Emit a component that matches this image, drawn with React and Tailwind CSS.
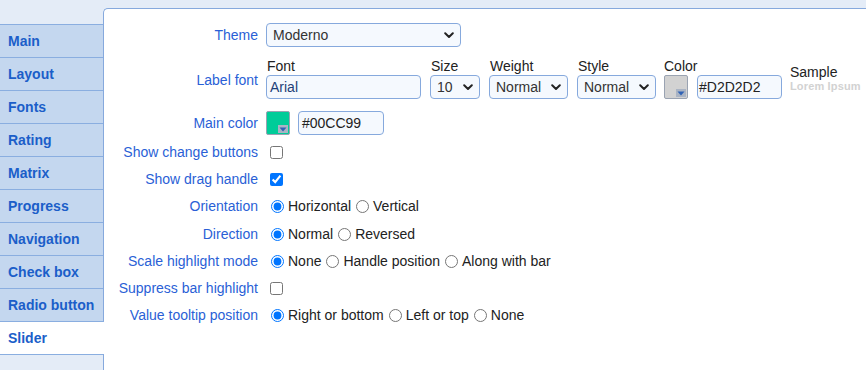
import React from "react";

const tabs = ["Main","Layout","Fonts","Rating","Matrix","Progress","Navigation","Check box","Radio button","Slider"];

function Chevron() {
  return (
    <svg width="10" height="7" viewBox="0 0 10 7" className="shrink-0">
      <path d="M1.2 1.3 L5 5 L8.8 1.3" fill="none" stroke="#222" strokeWidth="2" strokeLinecap="round" strokeLinejoin="round" />
    </svg>
  );
}

function Select({ value, w }) {
  return (
    <div className={`${w} h-[24px] flex items-center justify-between pl-[6px] pr-[6px] border border-[#86a9dd] rounded-[4px] bg-[#f5f9fe] text-[#333]`}>
      <span>{value}</span>
      <Chevron />
    </div>
  );
}

function Input({ value, w, cls = "text-[#222]", pl = "pl-[3px]" }) {
  return (
    <div className={`${w} h-[24px] flex items-center ${pl} border border-[#86a9dd] rounded-[4px] bg-[#f5f9fe] ${cls}`}>
      {value}
    </div>
  );
}

function Swatch({ color }) {
  return (
    <div className="relative w-[24px] h-[24px] border border-[#9aa3b2] rounded-[2px]" style={{ background: color }}>
      <div className="absolute right-[1px] bottom-[1px] w-[10px] h-[8px] bg-[#aab4c4] flex items-center justify-center">
        <svg width="8" height="5" viewBox="0 0 8 5"><path d="M0.5 0.5 L7.5 0.5 L4 4.5 Z" fill="#2f62b5" /></svg>
      </div>
    </div>
  );
}

function Row({ label, h = "h-[27.2px]", children, cls = "" }) {
  return (
    <div className={`flex items-center ${h} ${cls}`}>
      <div className="w-[154px] shrink-0 text-right text-[#2a5fd6]">{label}</div>
      <div className="ml-[8px] flex items-center">{children}</div>
    </div>
  );
}

function Radios({ options }) {
  return (
    <div className="flex items-center text-[#222]">
      {options.map((o, i) => (
        <label key={o} className="flex items-center">
          <input type="radio" name={options.join("")} defaultChecked={i === 0} className="ml-[5px] mr-[4px] w-[13px] h-[13px]" />
          <span>{o}</span>
        </label>
      ))}
    </div>
  );
}

function Check({ checked }) {
  return <input type="checkbox" defaultChecked={checked} className="ml-[4px] w-[13px] h-[13px]" />;
}

function Labeled({ label, children }) {
  return (
    <div className="flex flex-col">
      <div className="h-[17px] leading-[16px] text-[#222] pl-[1px]">{label}</div>
      {children}
    </div>
  );
}

export default function App() {
  return (
    <div className="w-[866px] h-[370px] flex bg-[#e4ecf7] overflow-hidden text-[14px]" style={{ fontFamily: '"Liberation Sans", Arial, sans-serif' }}>
      <div className="w-[103px] shrink-0 pt-[24px] flex flex-col">
        {tabs.map((t) => {
          const active = t === "Slider";
          return (
            <div
              key={t}
              className={`h-[33px] border-t border-[#8aaee0] flex items-center pl-[8px] font-bold text-[#1b5ec9] ${active ? "bg-white w-[104px] relative z-10" : "bg-[#c4d7ef]"}`}
            >
              {t}
            </div>
          );
        })}
        <div className="border-t border-[#8aaee0]" />
      </div>
      <div className="flex-1 mt-[8px] bg-white border-l border-t border-[#86a9dd] rounded-tl-[5px] pt-[14px]">
        <Row label="Theme" h="h-[24px]">
          <Select value="Moderno" w="w-[195px]" />
        </Row>
        <Row label="Label font" h="h-[41px]" cls="mt-[11px] pt-[3px]">
          <div className="flex items-start gap-[9px] -mt-[3px]">
            <Labeled label="Font"><Input value="Arial" w="w-[155px]" cls="text-[#1d3f78]" /></Labeled>
            <Labeled label="Size"><Select value="10" w="w-[50px]" /></Labeled>
            <Labeled label="Weight"><Select value="Normal" w="w-[79px]" /></Labeled>
            <Labeled label="Style"><Select value="Normal" w="w-[79px]" /></Labeled>
            <div className="flex flex-col -ml-[1px]">
              <div className="h-[17px] leading-[16px] text-[#222]">Color</div>
              <div className="flex gap-[9px]">
                <Swatch color="#d2d2d2" />
                <Input value="#D2D2D2" w="w-[85px]" pl="pl-[1px]" />
              </div>
            </div>
            <div className="flex flex-col pt-[6px] -ml-[1px]">
              <div className="leading-[16px] text-[#222]">Sample</div>
              <div className="text-[11px] font-bold leading-[13px] text-[#d2d2d2] whitespace-nowrap tracking-[0.15px]">Lorem Ipsum</div>
            </div>
          </div>
        </Row>
        <Row label="Main color" h="h-[24px]" cls="mt-[12px]">
          <div className="flex gap-[8px]">
            <Swatch color="#00cc99" />
            <Input value="#00CC99" w="w-[86px]" />
          </div>
        </Row>
        <div className="mt-[4px]">
          <Row label="Show change buttons"><Check checked={false} /></Row>
          <Row label="Show drag handle"><Check checked={true} /></Row>
          <Row label="Orientation"><Radios options={["Horizontal", "Vertical"]} /></Row>
          <Row label="Direction"><Radios options={["Normal", "Reversed"]} /></Row>
          <Row label="Scale highlight mode"><Radios options={["None", "Handle position", "Along with bar"]} /></Row>
          <Row label="Suppress bar highlight"><Check checked={false} /></Row>
          <Row label="Value tooltip position"><Radios options={["Right or bottom", "Left or top", "None"]} /></Row>
        </div>
      </div>
    </div>
  );
}
